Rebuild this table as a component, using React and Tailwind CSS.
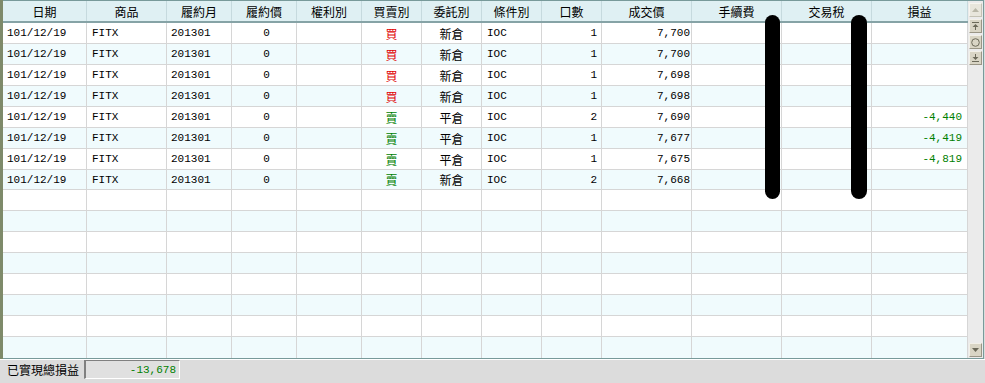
import React from 'react'

const cols = [
  { h: '日期', w: 'w-[84px]', a: 'justify-start pl-[4px]' },
  { h: '商品', w: 'w-[80px]', a: 'justify-start pl-[5px]' },
  { h: '履約月', w: 'w-[65px]', a: 'justify-start pl-[4px]' },
  { h: '履約價', w: 'w-[65px]', a: 'justify-center pl-[5px]' },
  { h: '權利別', w: 'w-[65px]', a: 'justify-center' },
  { h: '買賣別', w: 'w-[60px]', a: 'justify-center', cjk: true },
  { h: '委託別', w: 'w-[60px]', a: 'justify-center', cjk: true },
  { h: '條件別', w: 'w-[60px]', a: 'justify-start pl-[5px]' },
  { h: '口數', w: 'w-[60px]', a: 'justify-end pr-[4px]' },
  { h: '成交價', w: 'w-[90px]', a: 'justify-end pr-[1px]' },
  { h: '手續費', w: 'w-[90px]', a: 'justify-end pr-[4px]' },
  { h: '交易稅', w: 'w-[90px]', a: 'justify-end pr-[4px]' },
  { h: '損益', w: 'w-[96px]', a: 'justify-end pr-[5px]' },
]

const B = 'text-[#e00000]'
const S = 'text-[#008000]'

const data = [
  ['買', '新倉', '1', '7,700', ''],
  ['買', '新倉', '1', '7,700', ''],
  ['買', '新倉', '1', '7,698', ''],
  ['買', '新倉', '1', '7,698', ''],
  ['賣', '平倉', '2', '7,690', '-4,440'],
  ['賣', '平倉', '1', '7,677', '-4,419'],
  ['賣', '平倉', '1', '7,675', '-4,819'],
  ['賣', '新倉', '2', '7,668', ''],
]

const rows = Array.from({ length: 16 }, (_, i) => {
  const d = data[i]
  if (!d) return Array(13).fill('')
  return ['101/12/19', 'FITX', '201301', '0', '', d[0], d[1], 'IOC', d[2], d[3], '', '', d[4]]
})

function SbBtn({ disabled, children }) {
  return (
    <div
      className={
        'ml-[1px] mt-[2px] w-[13px] h-[14px] flex items-center justify-center border ' +
        (disabled
          ? 'bg-[#e8e6dc] border-t-[#f6f5ef] border-l-[#f6f5ef] border-b-[#c4c2b4] border-r-[#c4c2b4] text-[#b9b7a8]'
          : 'bg-[#d9d5c5] border-t-[#f2f0e8] border-l-[#f2f0e8] border-b-[#9a9686] border-r-[#9a9686] text-[#6b6959]')
      }
    >
      {children}
    </div>
  )
}

export default function App() {
  return (
    <div className="w-[985px] h-[383px] bg-[#dcdcdc] flex flex-col overflow-hidden font-['Liberation_Mono','Noto_Sans_CJK_TC',monospace] text-[11px] text-black">
      <div className="flex h-[359px]">
        <div className="w-[3px] bg-[#7e8a6a]" />
        <div className="relative flex border-t border-b border-r border-[#789a9a] bg-white">
          <div className="flex flex-col w-[965px]">
            <div className="flex h-[22px] bg-[#dff0f3] border-b-2 border-[#86a3a6]">
              {cols.map((c, j) => (
                <div
                  key={j}
                  className={`${c.w} shrink-0 border-r border-[#c6dade] flex items-center justify-center pt-[2px] font-['Noto_Sans_CJK_TC',sans-serif] text-[12px] leading-none`}
                >
                  {c.h}
                </div>
              ))}
            </div>
            {rows.map((r, i) => (
              <div
                key={i}
                className={`flex h-[21px] ${i < 15 ? 'border-b border-[#d6d6d6]' : ''} ${i % 2 ? 'bg-[#f0fbfd]' : 'bg-white'}`}
              >
                {r.map((v, j) => {
                  const c = cols[j]
                  let color = ''
                  if (j === 5) color = v === '買' ? B : S
                  if (j === 12) color = S
                  return (
                    <div
                      key={j}
                      className={`${c.w} ${c.a} ${color} shrink-0 border-r border-[#d6d6d6] flex items-center pt-[2px] leading-none whitespace-nowrap ${c.cjk ? "font-['Noto_Sans_CJK_TC',sans-serif] text-[12px]" : ''}`}
                    >
                      {v}
                    </div>
                  )
                })}
              </div>
            ))}
          </div>
          <div className="w-[15px] bg-[#ebebeb] flex flex-col">
            <SbBtn disabled>
              <svg width="7" height="4" viewBox="0 0 7 4"><path d="M0 4L3.5 0L7 4Z" fill="currentColor" /></svg>
            </SbBtn>
            <SbBtn>
              <svg width="7" height="8" viewBox="0 0 7 8" fill="currentColor">
                <rect x="0" y="0" width="7" height="1" />
                <path d="M0.5 5L3.5 2L6.5 5Z" />
                <rect x="3" y="5" width="1" height="3" />
              </svg>
            </SbBtn>
            <SbBtn>
              <svg width="9" height="9" viewBox="0 0 9 9"><circle cx="4.5" cy="4.5" r="3.8" fill="none" stroke="currentColor" strokeWidth="1" /></svg>
            </SbBtn>
            <SbBtn>
              <svg width="7" height="8" viewBox="0 0 7 8" fill="currentColor">
                <rect x="3" y="0" width="1" height="3" />
                <path d="M0.5 3L3.5 6L6.5 3Z" />
                <rect x="0" y="7" width="7" height="1" />
              </svg>
            </SbBtn>
            <div className="flex-1" />
            <div className="mb-[1px]">
              <SbBtn>
                <svg width="7" height="4" viewBox="0 0 7 4"><path d="M0 0L7 0L3.5 4Z" fill="currentColor" /></svg>
              </SbBtn>
            </div>
          </div>
          <div className="absolute left-[762px] top-[14px] w-[15px] h-[184px] rounded-full bg-black" />
          <div className="absolute left-[848px] top-[14px] w-[16px] h-[184px] rounded-full bg-black" />
        </div>
      </div>
      <div className="flex-1 border-t border-white flex items-start">
        <div className="flex items-center h-[19px] pl-[7px]">
          <span className="font-['Noto_Sans_CJK_TC',sans-serif] text-[12px] leading-none w-[72px]">已實現總損益</span>
          <div className="ml-[5px] w-[96px] h-[19px] bg-[#e0e0e0] border-l-2 border-t border-[#808080] border-r border-b border-r-white border-b-white flex items-center justify-end pr-[3px] text-[#008000] pt-[1px]">
            -13,678
          </div>
        </div>
      </div>
    </div>
  )
}
